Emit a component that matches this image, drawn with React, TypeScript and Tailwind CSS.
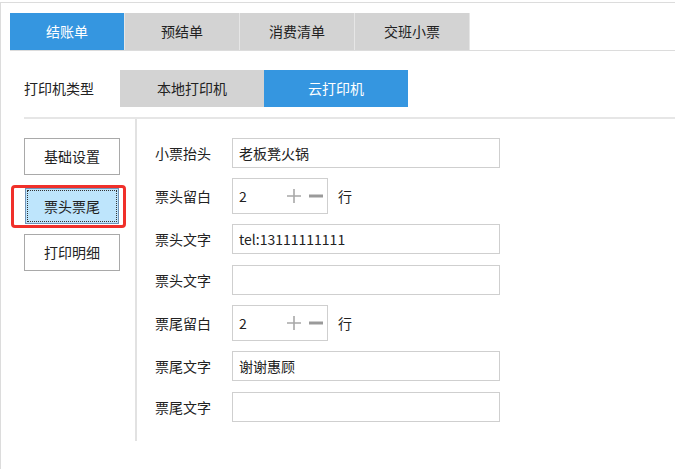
import React from 'react'

const font = { fontFamily: '"Noto Sans CJK SC", "Noto Sans", sans-serif' }

const tabs = ['结账单', '预结单', '消费清单', '交班小票']

function TextRow({ label, value, mt }: { label: string; value: string; mt: string }) {
  return (
    <div className={`flex items-center ${mt}`}>
      <span className="w-[77px] text-[14px] text-[#222]">{label}</span>
      <div className="flex h-[30px] w-[268px] items-center border border-[#cfcfcf] bg-white px-[6px] text-[14px] text-[#222]">
        {value}
      </div>
    </div>
  )
}

function StepperRow({ label, value, mt }: { label: string; value: string; mt: string }) {
  return (
    <div className={`flex items-center ${mt}`}>
      <span className="w-[77px] text-[14px] text-[#222]">{label}</span>
      <div className="flex h-[36px] w-[96px] items-center border border-[#cfcfcf] bg-white pl-[6px] text-[14px] text-[#222]">
        <span className="flex-1">{value}</span>
        <svg width="14" height="14" viewBox="0 0 14 14" className="mr-[8px]">
          <path d="M7 0v14M0 7h14" stroke="#a8a8a8" strokeWidth="1.6" />
        </svg>
        <svg width="14" height="14" viewBox="0 0 14 14" className="mr-[4px]">
          <path d="M0 7h14" stroke="#9a9a9a" strokeWidth="3" />
        </svg>
      </div>
      <span className="ml-[10px] text-[14px] text-[#222]">行</span>
    </div>
  )
}

export default function App() {
  return (
    <div className="h-[469px] w-[675px] overflow-hidden bg-white pt-[2px]" style={font}>
      <div className="h-full border-l border-t border-[#dcdcdc] pl-[9px] pt-[10px]">
        {/* document type tabs */}
        <div className="flex h-[38px] border-b border-[#dcdcdc]">
          {tabs.map((t, i) => (
            <div
              key={t}
              className={`flex w-[115px] items-center justify-center border-r border-[#e6e6e6] text-[14px] ${
                i === 0 ? 'bg-[#3596e0] text-white' : 'bg-[#d3d3d3] text-[#222]'
              }`}
            >
              {t}
            </div>
          ))}
        </div>

        {/* printer type */}
        <div className="mt-[19px] flex h-[37px] items-center pl-[14px]">
          <span className="w-[96px] text-[14px] text-[#222]">打印机类型</span>
          <div className="flex h-full w-[144px] items-center justify-center bg-[#d3d3d3] text-[14px] text-[#222]">
            本地打印机
          </div>
          <div className="flex h-full w-[144px] items-center justify-center bg-[#3596e0] text-[14px] text-white">
            云打印机
          </div>
        </div>

        <div className="ml-[14px] mt-[10px] flex border-t-2 border-[#e6e6e6]">
          {/* side menu */}
          <div className="relative flex w-[111px] flex-col pt-[19px]">
            <div className="flex h-[37px] w-[96px] items-center justify-center border border-[#a9a9a9] bg-white text-[14px] text-[#222]">
              基础设置
            </div>
            <div className="relative mt-[13px] ml-[1px] flex h-[36px] w-[94px] items-center justify-center border border-[#6f93b8] bg-[#bee5fc] text-[14px] text-[#222]">
              <div className="pointer-events-none absolute inset-[1px] border border-dotted border-[#333]" />
              票头票尾
              <div className="pointer-events-none absolute left-[-15px] top-[-4px] h-[43px] w-[115px] rounded-[4px] border-[3px] border-[#f0302a]" />
            </div>
            <div className="mt-[10px] flex h-[37px] w-[96px] items-center justify-center border border-[#a9a9a9] bg-white text-[14px] text-[#222]">
              打印明细
            </div>
          </div>

          {/* form */}
          <div className="border-l-2 border-[#e2e2e2] pb-[19px] pl-[18px] pt-[19px]">
            <TextRow label="小票抬头" value="老板凳火锅" mt="" />
            <StepperRow label="票头留白" value="2" mt="mt-[10px]" />
            <TextRow label="票头文字" value="tel:13111111111" mt="mt-[10px]" />
            <TextRow label="票头文字" value="" mt="mt-[11px]" />
            <StepperRow label="票尾留白" value="2" mt="mt-[10px]" />
            <TextRow label="票尾文字" value="谢谢惠顾" mt="mt-[10px]" />
            <TextRow label="票尾文字" value="" mt="mt-[11px]" />
          </div>
        </div>
      </div>
    </div>
  )
}
